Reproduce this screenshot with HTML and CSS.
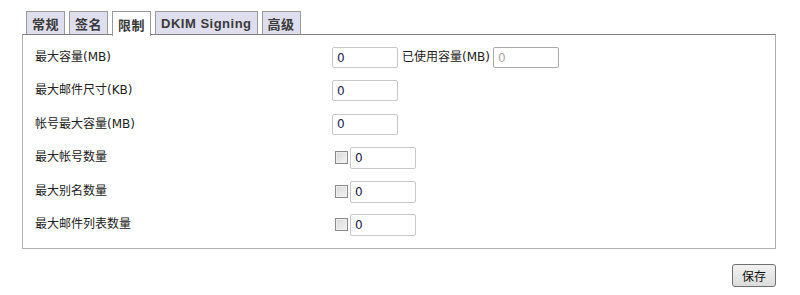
FILE: index.html
```html
<!DOCTYPE html>
<html lang="zh">
<head>
    <meta charset="UTF-8">
    <title>限制</title>
    <link rel="stylesheet" href="styles.css">
</head>
<body>

<div class="tabs">
    <span class="tab">常规</span>
    <span class="tab">签名</span>
    <span class="tab active">限制</span>
    <span class="tab">DKIM Signing</span>
    <span class="tab">高级</span>
</div>

<div class="panel">
    <div class="row">
        <label>最大容量(MB)</label>
        <input type="text" class="field" value="0">
        <span class="used">已使用容量(MB)</span>
        <input type="text" class="field" value="0" disabled>
    </div>
    <div class="row">
        <label>最大邮件尺寸(KB)</label>
        <input type="text" class="field" value="0">
    </div>
    <div class="row">
        <label>帐号最大容量(MB)</label>
        <input type="text" class="field" value="0">
    </div>
    <div class="row">
        <label>最大帐号数量</label>
        <span class="check"></span>
        <input type="text" class="field" value="0">
    </div>
    <div class="row">
        <label>最大别名数量</label>
        <span class="check"></span>
        <input type="text" class="field" value="0">
    </div>
    <div class="row">
        <label>最大邮件列表数量</label>
        <span class="check"></span>
        <input type="text" class="field" value="0">
    </div>
</div>

<div class="actions">
    <button type="button" class="save">保存</button>
</div>

</body>
</html>
```

FILE: styles.css
```css
body {
    margin: 0;
    padding: 11px 24px 0 22px;
    font-family: "DejaVu Sans", "Noto Sans CJK SC", sans-serif;
    font-size: 12px;
    color: #222;
    background: #fff;
}

.tabs {
    display: flex;
    gap: 4px;
    padding-left: 4px;
    height: 23px;
}

.tab {
    display: flex;
    align-items: center;
    padding: 0 5px;
    background: #dedeee;
    border: 1px solid #9a9a9a;
    border-bottom: none;
    font-weight: bold;
    font-size: 13px;
    letter-spacing: 0.5px;
    color: #3a3a3a;
    font-family: "Liberation Sans", "Noto Sans CJK SC", sans-serif;
}

.tab.active {
    background: #fff;
    height: 24px;
    position: relative;
    z-index: 1;
}

.panel {
    border: 1px solid #b0b0b0;
    border-top-color: #808080;
    padding: 12px 12px 3px 12px;
    height: 198px;
}

.row {
    display: flex;
    height: 33.4px;
    align-items: flex-start;
}

.row label {
    width: 297px;
    line-height: 21px;
}

.field {
    box-sizing: border-box;
    width: 66px;
    height: 21px;
    margin: 0;
    padding: 0 4px;
    border: 1px solid #c8c8c8;
    border-radius: 2px;
    font-family: "DejaVu Sans", sans-serif;
    font-size: 12px;
    color: #1a1a4a;
    background: #fff;
}

.field:disabled {
    color: #aaa;
    border-color: #aaa;
    background: #fff;
}

.used {
    line-height: 21px;
    margin: 0 3px 0 4px;
}

.check {
    box-sizing: border-box;
    width: 13px;
    height: 13px;
    margin: 4px 2px 0 3px;
    border: 1px solid #8a8a8a;
    background: linear-gradient(135deg, #d8d8d8, #f4f4f4);
    box-shadow: inset 0 0 0 1px #eee;
}

.check + .field {
    height: 22px;
}

.actions {
    display: flex;
    justify-content: flex-end;
    margin-top: 15px;
}

.save {
    width: 44px;
    height: 23px;
    padding: 0;
    border: 1px solid #707070;
    border-radius: 3px;
    background: linear-gradient(#f2f2f2, #dcdcdc);
    font-family: "Noto Sans CJK SC", sans-serif;
    font-size: 12px;
    color: #111;
}
```
